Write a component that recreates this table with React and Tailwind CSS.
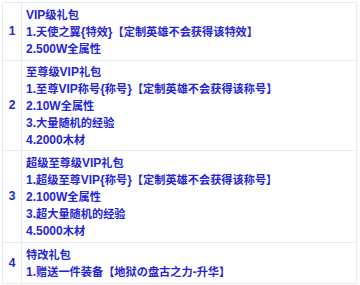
import React from 'react';

const rows = [
  {
    no: '1',
    lines: ['VIP级礼包', '1.天使之翼{特效}【定制英雄不会获得该特效】', '2.500W全属性'],
    h: 'h-[58px]',
  },
  {
    no: '2',
    lines: ['至尊级VIP礼包', '1.至尊VIP称号{称号}【定制英雄不会获得该称号】', '2.10W全属性', '3.大量随机的经验', '4.2000木材'],
    h: 'h-[90px]',
  },
  {
    no: '3',
    lines: ['超级至尊级VIP礼包', '1.超级至尊VIP{称号}【定制英雄不会获得该称号】', '2.100W全属性', '3.超大量随机的经验', '4.5000木材'],
    h: 'h-[92px]',
  },
  {
    no: '4',
    lines: ['特改礼包', '1.赠送一件装备【地狱の盘古之力-升华】'],
    h: 'h-[41px]',
  },
];

// latin runs are a bit larger than the CJK glyphs in the original
const Line = ({ text }) => {
  const parts = text.split(/([A-Za-z0-9.{}\-]+)/).filter(Boolean);
  return (
    <div className="whitespace-nowrap">
      {parts.map((p, i) =>
        /^[A-Za-z0-9.{}\-]+$/.test(p)
          ? <span key={i} className="text-[12px]">{p}</span>
          : <span key={i}>{p}</span>
      )}
    </div>
  );
};

const App = () => {
  return (
    <div
      className="w-[360px] h-[285px] bg-white pt-[2px] pl-[2px]"
      style={{ fontFamily: '"Liberation Sans", "Noto Sans CJK SC", sans-serif' }}
    >
      <table className="w-[355px] border-collapse text-[11.2px] leading-[17px] font-bold text-[#2525d8]">
        <tbody>
          {rows.map(row => (
            <tr key={row.no} className={row.h}>
              <td className="w-[19px] p-0 border border-[#e4ebf4] text-center align-middle text-[12px]">{row.no}</td>
              <td className="border border-[#e4ebf4] pl-[4px] pt-[2px] pb-0 align-middle">
                {row.lines.map((line, i) => (
                  <Line key={i} text={line} />
                ))}
              </td>
            </tr>
          ))}
        </tbody>
      </table>
    </div>
  );
};

export default App;
